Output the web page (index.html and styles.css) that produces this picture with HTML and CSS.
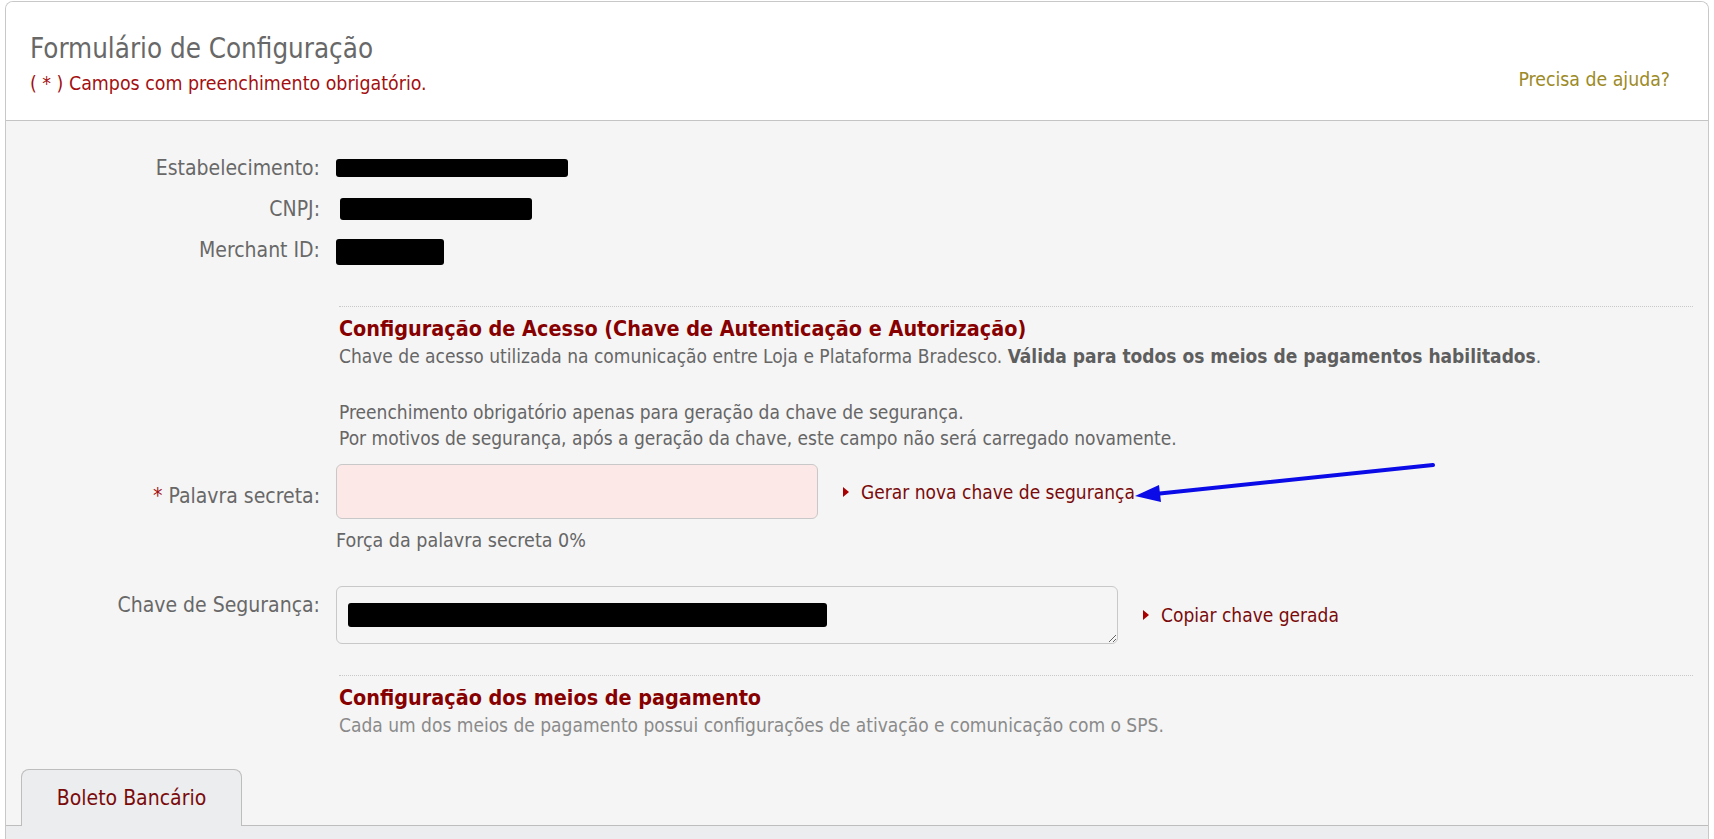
FILE: index.html
```html
<!DOCTYPE html>
<html lang="pt-BR">
<head>
    <meta charset="UTF-8">
    <meta name="viewport" content="width=device-width, initial-scale=1.0">
    <title>Formulário de Configuração</title>
    <link rel="stylesheet" href="styles.css">
</head>
<body>
    <div class="panel">
        <div class="panel-header">
            <div>
                <h1>Formulário de Configuração</h1>
                <p class="required-note">( * ) Campos com preenchimento obrigatório.</p>
            </div>
            <a class="help" href="#">Precisa de ajuda?</a>
        </div>

        <div class="panel-body">
            <!-- Dados da loja (ocultos) -->
            <div class="form-grid">
                <div class="label info">Estabelecimento:</div>
                <div class="value info"><span class="hidden-data est"></span></div>

                <div class="label info">CNPJ:</div>
                <div class="value info"><span class="hidden-data cnpj"></span></div>

                <div class="label info">Merchant ID:</div>
                <div class="value info"><span class="hidden-data mid"></span></div>

                <div class="section first">
                    <h2>Configuração de Acesso (Chave de Autenticação e Autorização)</h2>
                    <p>Chave de acesso utilizada na comunicação entre Loja e Plataforma Bradesco. <b>Válida para todos os meios de pagamentos habilitados</b>.</p>
                    <p class="spaced">Preenchimento obrigatório apenas para geração da chave de segurança.<br>
                    Por motivos de segurança, após a geração da chave, este campo não será carregado novamente.</p>
                </div>

                <div class="label secret-label"><span class="star">*</span> Palavra secreta:</div>
                <div class="value">
                    <div class="field-line">
                        <input type="password" class="secret-input">
                        <a class="action" href="#">Gerar nova chave de segurança</a>
                    </div>
                    <p class="strength">Força da palavra secreta 0%</p>
                </div>

                <div class="label key-label">Chave de Segurança:</div>
                <div class="value">
                    <div class="field-line key-line">
                        <div class="key-wrap">
                            <textarea class="key-input" readonly></textarea>
                            <span class="hidden-data key"></span>
                        </div>
                        <a class="action" href="#">Copiar chave gerada</a>
                    </div>
                </div>

                <div class="section">
                    <h2>Configuração dos meios de pagamento</h2>
                    <p class="muted">Cada um dos meios de pagamento possui configurações de ativação e comunicação com o SPS.</p>
                </div>
            </div>

            <!-- Abas dos meios de pagamento -->
            <div class="tabs">
                <a class="tab active" href="#">Boleto Bancário</a>
            </div>
            <div class="tab-content"></div>

            <svg class="pointer" width="315" height="50" viewBox="0 0 315 50">
                <line x1="302" y1="9" x2="24" y2="38" stroke="#0b0be8" stroke-width="4" stroke-linecap="round"/>
                <polygon points="4,40 30,46 28,29" fill="#0b0be8"/>
            </svg>
        </div>
    </div>
</body>
</html>
```

FILE: styles.css
```css
/* Base */
* {
    margin: 0;
    padding: 0;
    box-sizing: border-box;
}

body {
    font-family: "DejaVu Sans", sans-serif;
    font-stretch: condensed;
    background: #ffffff;
    color: #666;
    padding: 1px 5px 0;
    overflow: hidden;
}

a {
    text-decoration: none;
}

/* Painel */
.panel {
    border: 1px solid #c8c8c8;
    border-bottom: none;
    border-radius: 8px 8px 0 0;
    overflow: hidden;
}

.panel-header {
    display: flex;
    justify-content: space-between;
    align-items: flex-end;
    background: #fff;
    padding: 29px 38px 23px 24px;
    border-bottom: 1px solid #c4c4c4;
}

h1 {
    font-size: 27.5px;
    font-weight: normal;
    line-height: 34px;
    color: #686868;
}

.required-note {
    margin-top: 6px;
    font-size: 19.4px;
    line-height: 26px;
    color: #a30f0f;
}

.help {
    font-size: 19.3px;
    line-height: 26px;
    color: #9c8a26;
    padding-bottom: 4px;
}

.panel-body {
    position: relative;
    background: #f5f5f5;
    padding-top: 26px;
}

/* Grade do formulário */
.form-grid {
    display: grid;
    grid-template-columns: 314px 1fr;
    column-gap: 16px;
}

.label {
    text-align: right;
    font-size: 21px;
    color: #686868;
}

.info {
    height: 41px;
    display: flex;
    align-items: center;
}

.label.info {
    justify-content: flex-end;
}

.hidden-data {
    display: inline-block;
    background: #000;
    border-radius: 3px;
}

.hidden-data.est {
    width: 232px;
    height: 18px;
}

.hidden-data.cnpj {
    width: 192px;
    height: 22px;
    margin-left: 4px;
}

.hidden-data.mid {
    width: 108px;
    height: 26px;
    margin-top: 4px;
}

/* Seções */
.section {
    grid-column: 2;
    margin: 36px 15px 0 3px;
    border-top: 1px dotted #c9c9c9;
    padding-top: 10px;
    font-size: 19px;
    line-height: 26px;
}

.section.first {
    margin-bottom: 13px;
}

.section h2 {
    font-size: 21.4px;
    line-height: 24px;
    color: #870000;
    margin-bottom: 2px;
}

.section b {
    color: #5e5e5e;
}

.section .spaced {
    margin-top: 30px;
}

.section .muted {
    color: #8a8a8a;
}

.section:last-child {
    margin-top: 31px;
}

/* Campos */
.field-line {
    display: flex;
    align-items: center;
}

.secret-label {
    padding-top: 19px;
    line-height: 26px;
}

.star {
    color: #a30f0f;
}

.secret-input {
    width: 482px;
    height: 55px;
    background: #fde8e8;
    border: 1px solid #c8c8c8;
    border-radius: 6px;
    outline: none;
}

.action {
    position: relative;
    margin-left: 43px;
    font-size: 19px;
    color: #7a0a0a;
}

.action::before {
    content: "";
    position: absolute;
    left: -18px;
    top: 50%;
    margin-top: -5px;
    border-left: 6px solid #a80000;
    border-top: 5.5px solid transparent;
    border-bottom: 5.5px solid transparent;
}

.strength {
    margin-top: 9px;
    font-size: 19.5px;
    line-height: 26px;
}

.key-label {
    margin-top: 32px;
    padding-top: 6px;
    line-height: 26px;
}

.key-line {
    margin-top: 32px;
}

.key-wrap {
    position: relative;
    height: 58px;
}

.key-input {
    display: block;
    width: 782px;
    height: 58px;
    background: #f5f5f5;
    border: 1px solid #c8c8c8;
    border-radius: 6px;
    resize: both;
    outline: none;
}

.hidden-data.key {
    position: absolute;
    left: 12px;
    top: 17px;
    width: 479px;
    height: 24px;
}

/* Abas */
.tabs {
    display: flex;
    margin-top: 31px;
    padding-left: 15px;
    border-bottom: 1px solid #bdbdbd;
}

.tab {
    width: 221px;
    height: 57px;
    margin-bottom: -1px;
    background: #ecedef;
    border: 1px solid #bdbdbd;
    border-bottom: none;
    border-radius: 8px 8px 0 0;
    font-size: 21px;
    line-height: 56px;
    text-align: center;
    color: #7a0a0a;
}

.tab-content {
    height: 40px;
    background: #ecedef;
}

/* Seta de destaque */
.pointer {
    position: absolute;
    left: 1125px;
    top: 335px;
}
```
